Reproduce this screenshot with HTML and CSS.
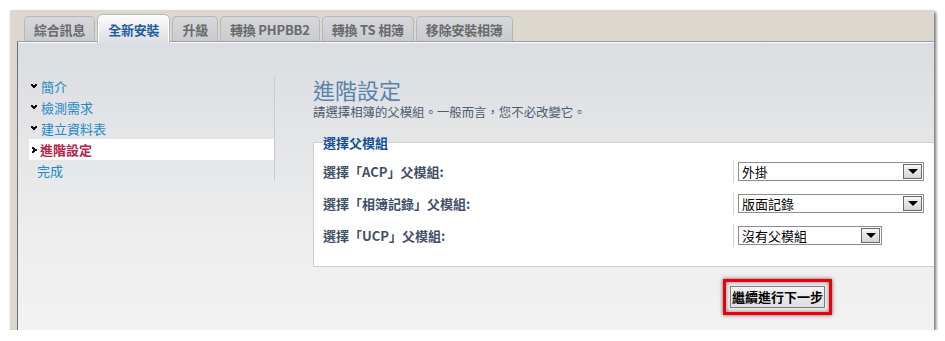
FILE: index.html
```html
<!DOCTYPE html>
<html lang="zh-Hant">
<head>
  <meta charset="UTF-8">
  <meta name="viewport" content="width=device-width, initial-scale=1.0">
  <title>進階設定</title>
  <link rel="stylesheet" href="styles.css">
</head>
<body>

  <div class="frame">
    <ul class="tabs">
      <li class="tab">綜合訊息</li>
      <li class="tab active">全新安裝</li>
      <li class="tab">升級</li>
      <li class="tab">轉換 PHPBB2</li>
      <li class="tab">轉換 TS 相簿</li>
      <li class="tab">移除安裝相簿</li>
    </ul>

    <div class="panel">
      <ul class="menu">
        <li class="step done"><svg class="mark" width="6" height="5" viewBox="0 0 6 5"><path d="M0 0h2v1h2V0h2v2H5v1H4v1H2V3H1V2H0z" fill="#111"/></svg>簡介</li>
        <li class="step done"><svg class="mark" width="6" height="5" viewBox="0 0 6 5"><path d="M0 0h2v1h2V0h2v2H5v1H4v1H2V3H1V2H0z" fill="#111"/></svg>檢測需求</li>
        <li class="step done"><svg class="mark" width="6" height="5" viewBox="0 0 6 5"><path d="M0 0h2v1h2V0h2v2H5v1H4v1H2V3H1V2H0z" fill="#111"/></svg>建立資料表</li>
        <li class="step current"><svg class="mark" width="5" height="6" viewBox="0 0 5 6"><path d="M0 0h2v1h1v1h2v2H3v1H2v1H0V4h1V2H0z" fill="#111"/></svg>進階設定</li>
        <li class="step todo">完成</li>
      </ul>

      <div class="main">
        <h1>進階設定</h1>
        <p class="intro">請選擇相簿的父模組。一般而言，您不必改變它。</p>

        <fieldset class="group">
          <legend>選擇父模組</legend>
          <dl class="row">
            <dt>選擇「ACP」父模組:</dt>
            <dd><div class="select wide"><span>外掛</span><i class="arrow"></i></div></dd>
          </dl>
          <dl class="row">
            <dt>選擇「相簿記錄」父模組:</dt>
            <dd><div class="select wide"><span>版面記錄</span><i class="arrow"></i></div></dd>
          </dl>
          <dl class="row">
            <dt>選擇「UCP」父模組:</dt>
            <dd><div class="select"><span>沒有父模組</span><i class="arrow"></i></div></dd>
          </dl>
        </fieldset>

        <div class="actions">
          <div class="highlight">
            <button type="submit">繼續進行下一步</button>
          </div>
        </div>
      </div>
    </div>
  </div>

</body>
</html>
```

FILE: styles.css
```css
body {
  margin: 0;
  background-color: #fff;
  font-family: "Noto Sans CJK TC", "DejaVu Sans", sans-serif;
}

.frame {
  width: 917px;
  height: 314px;
  margin: 10px 0 0 10px;
  padding: 6px 0 0 7px;
  background-color: #dcd8d0;
  box-shadow: 2px 2px 3px rgba(0, 0, 0, 0.55);
}

/* tabs */
.tabs {
  display: flex;
  gap: 2px;
  margin: 0;
  padding: 0 0 0 7px;
  list-style: none;
  height: 25px;
  position: relative;
  z-index: 1;
}

.tab {
  height: 24px;
  padding: 0 9px;
  border: 1px solid #b6b6b6;
  border-bottom: none;
  border-radius: 5px 5px 0 0;
  background: linear-gradient(#d6d8db, #c9cbce);
  color: #6a6a6a;
  font-size: 13px;
  font-weight: bold;
  line-height: 25px;
  letter-spacing: -0.2px;
}

.tab.active {
  height: 27px;
  margin: -1px 1px 0;
  padding: 0 9px;
  border-color: #fff;
  background: linear-gradient(#fbfbfc, #dcdee1);
  color: #1d5f9f;
  line-height: 27px;
  box-shadow: 0 0 0 1px #b6b6b6;
  clip-path: inset(-2px -2px 0 -2px);
}

/* panel */
.panel {
  display: flex;
  height: 288px;
  border-top: 1px solid #999;
  border-left: 1px solid #6f6f6f;
  box-shadow: inset 0 1px 0 #fff;
  background: linear-gradient(#dadde1, #eeeeee 70%, #f2f2f2);
}

.menu {
  width: 245px;
  margin: 34px 0 0 11px;
  padding: 0;
  list-style: none;
  height: 105px;
  border-right: 1px solid #c9cbce;
}

.step {
  display: flex;
  align-items: center;
  height: 21px;
  padding-left: 2px;
  font-size: 13px;
  color: #1a8ac8;
}

.mark { margin-right: 4px; }

.step.current {
  background-color: #fff;
  color: #b72449;
  font-weight: bold;
  padding-left: 3px;
}

.step.current .mark { margin-right: 3px; }

.step.todo { padding-left: 8px; }

/* main column */
.main {
  flex: 1;
  margin-left: 38px;
  padding-top: 33px;
}

h1 {
  margin: 0;
  font-size: 22px;
  font-weight: normal;
  line-height: 29px;
  color: #5b82ad;
}

.intro {
  margin: 0;
  font-size: 12.4px;
  line-height: 16px;
  color: #4d5b70;
}

.group {
  margin: 13px 0 0;
  padding: 8px 0 19px 9px;
  border: 1px solid #cfcfcf;
  border-right: none;
  background-color: #fff;
}

.group legend {
  padding: 0;
  font-size: 13px;
  font-weight: bold;
  color: #115098;
}

.row {
  display: flex;
  align-items: center;
  margin: 0 0 9px;
}

.row:last-child { margin-bottom: 0; }

.row dt {
  width: 410px;
  font-size: 13px;
  font-weight: bold;
  color: #425067;
}

.row dd {
  margin: 0;
  height: 23px;
  padding-left: 4px;
  border-left: 1px solid #d5d5d5;
  display: flex;
  align-items: center;
}

.select {
  display: flex;
  align-items: center;
  justify-content: space-between;
  width: 142px;
  height: 17px;
  border: 1px solid #8c8c8c;
  background-color: #fff;
  font-size: 13px;
  color: #000;
}

.select.wide { width: 184px; }

.select span { padding-left: 3px; line-height: 17px; }

.arrow {
  width: 19px;
  height: 15px;
  margin-right: 1px;
  border: 1px solid #6a6a6a;
  box-sizing: border-box;
  background: linear-gradient(#f6f6f6, #d4d4d4);
  position: relative;
}

.arrow::after {
  content: "";
  position: absolute;
  left: 4px;
  top: 4px;
  border-left: 5px solid transparent;
  border-right: 5px solid transparent;
  border-top: 5px solid #000;
}

/* submit */
.actions {
  padding: 12px 0 0 410px;
}

.highlight {
  display: inline-block;
  padding: 4px;
  border: 3px solid #e8000b;
  box-shadow: 0 0 4px rgba(0, 0, 0, 0.6), inset 0 0 4px rgba(0, 0, 0, 0.5);
  background-color: #f0f0f0;
}

button[type="submit"] {
  display: block;
  height: 22px;
  padding: 0 1px;
  border: 1px solid #7d7d7d;
  background: linear-gradient(#f4f4f4, #dedede);
  color: #000;
  font-family: "Noto Sans CJK TC", sans-serif;
  font-size: 13px;
  font-weight: bold;
  line-height: 20px;
  cursor: pointer;
}
```
